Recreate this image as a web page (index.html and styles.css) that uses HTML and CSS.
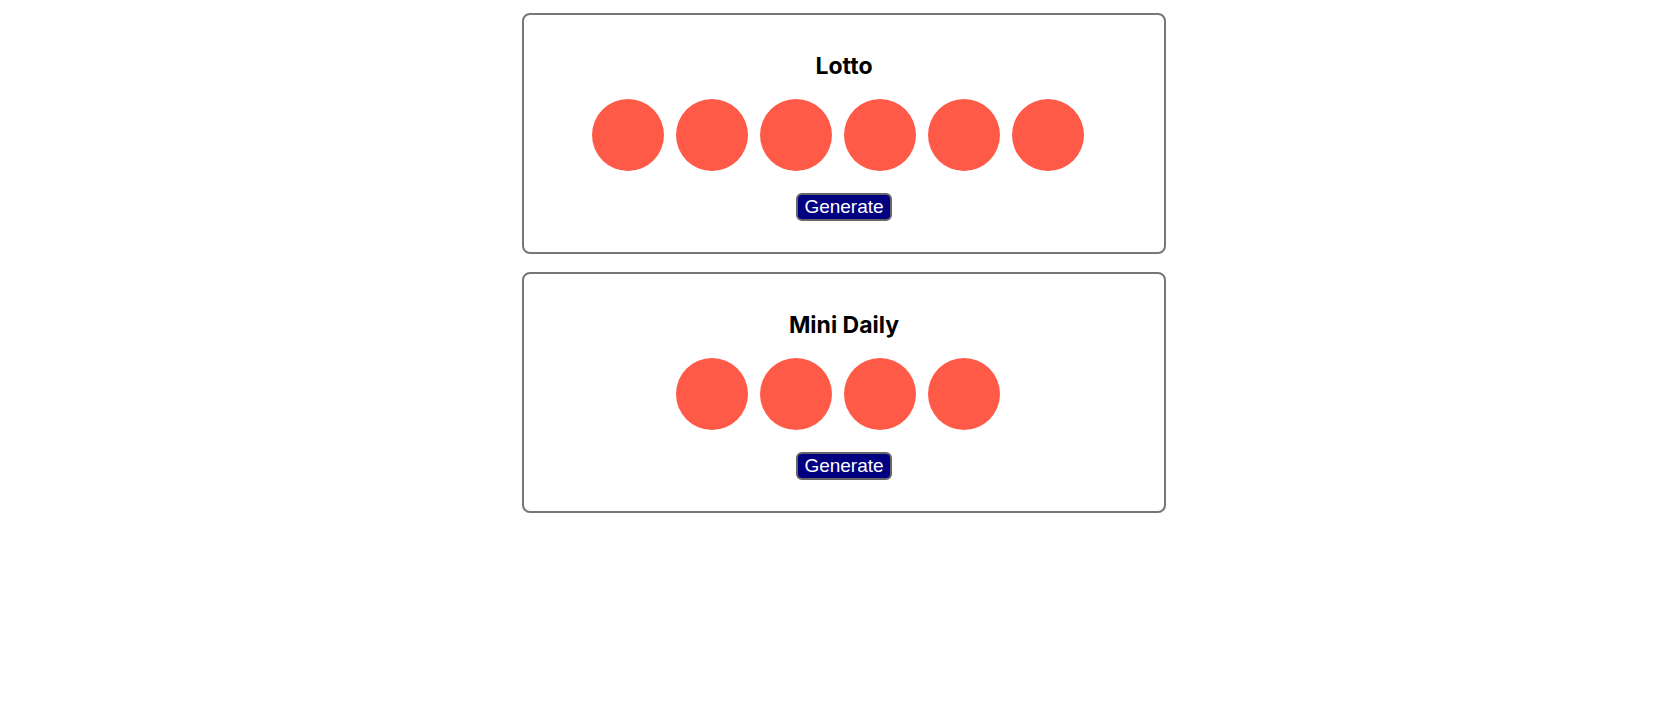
FILE: index.html
```html
<!DOCTYPE html>
<html>
<head>
<meta charset="utf-8">
<link rel="stylesheet" href="styles.css">
</head>
<body>
<div class="app">
  <div class="card">
    <h2 class="title">Lotto</h2>
    <div class="balls">
      <span class="ball"></span><span class="ball"></span><span class="ball"></span><span class="ball"></span><span class="ball"></span><span class="ball"></span>
    </div>
    <button class="gen">Generate</button>
  </div>
  <div class="card">
    <h2 class="title">Mini Daily</h2>
    <div class="balls">
      <span class="ball"></span><span class="ball"></span><span class="ball"></span><span class="ball"></span>
    </div>
    <button class="gen">Generate</button>
  </div>
</div>
</body>
</html>
```
FILE: styles.css
```css
body {
  margin: 8px;
  background: #fff;
  font-family: Inter, "Liberation Sans", sans-serif;
}
.app {
  padding-left: 10px;
  padding-top: 5px;
  display: flex;
  flex-direction: column;
  align-items: center;
  gap: 18px;
}
.card {
  box-sizing: border-box;
  width: 644px;
  height: 241px;
  border: 2px solid #777;
  border-radius: 8px;
  padding: 37px 0 0;
  display: flex;
  flex-direction: column;
  align-items: center;
}
.title {
  margin: 0 0 18px;
  font-size: 23px;
  font-weight: 650;
  line-height: 29px;
  color: #000;
}
.balls {
  display: flex;
  justify-content: center;
  margin-bottom: 22px;
}
.ball {
  width: 72px;
  height: 72px;
  border-radius: 50%;
  background: #ff5a48;
  margin-right: 12px;
}
.gen {
  font-family: "Liberation Sans", Arial, sans-serif;
  font-size: 19px;
  line-height: normal;
  color: #fff;
  background: #000080;
  border: 2px solid #666;
  border-radius: 6px;
  padding: 1px 6px;
}
```
